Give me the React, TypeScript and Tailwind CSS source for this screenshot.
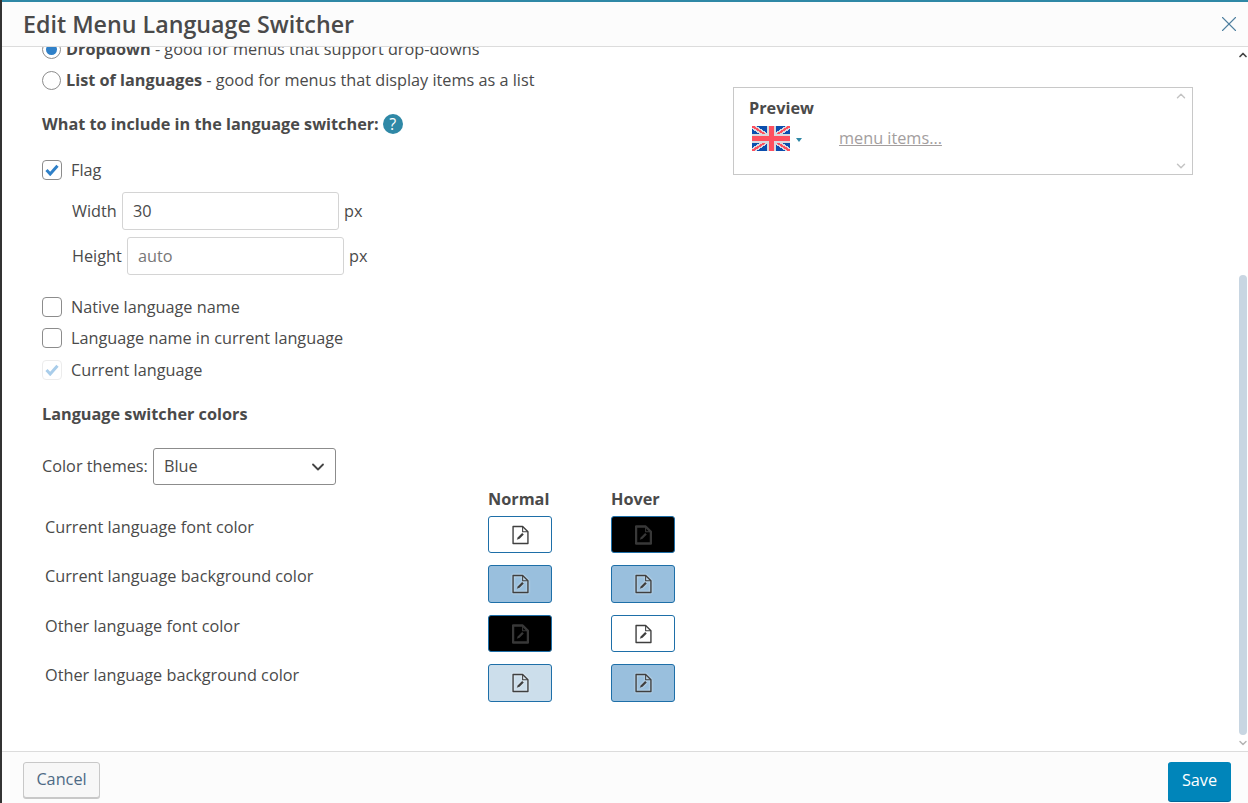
import { ChevronDown, ChevronUp, X } from "lucide-react";

const colorRows = [
  { label: "Current language font color", normal: "bg-white", hover: "bg-black" },
  { label: "Current language background color", normal: "bg-[#99bfdd]", hover: "bg-[#99bfdd]" },
  { label: "Other language font color", normal: "bg-black", hover: "bg-white" },
  { label: "Other language background color", normal: "bg-[#ccdeeb]", hover: "bg-[#99bfdd]" },
];

function DocIcon({ dark }: { dark: boolean }) {
  const c = dark ? "#383838" : "#3f3f3f";
  return (
    <svg width="17" height="20" viewBox="0 0 16 18" fill="none" aria-hidden="true" className={dark ? "blur-[0.6px]" : "drop-shadow-[0_0_1px_rgba(255,255,255,0.7)]"}>
      <path d="M1 1h9l5 5v11H1z" stroke={c} strokeWidth={dark ? 2.2 : 1.3} strokeLinejoin="round" />
      <path d="M10 1v5h5" stroke={c} strokeWidth="1" />
      <path d="M4.5 13.5l1-2.5 4-4 1.6 1.6-4 4z" fill={c} />
    </svg>
  );
}

function Swatch({ color }: { color: string }) {
  return (
    <div className={`flex h-[37.5px] w-16 items-center justify-center rounded-[3px] border border-[#1e6fa8] ${color}`}>
      <DocIcon dark={color === "bg-black"} />
    </div>
  );
}

function Check({ checked, faded }: { checked?: boolean; faded?: boolean }) {
  return (
    <span className={`flex size-5 shrink-0 items-center justify-center rounded-[4px] border ${faded ? "border-[#ececec]" : "border-[#8c8c8c]"}`}>
      {checked && (
        <svg width="14" height="12" viewBox="0 0 14 12" aria-hidden="true">
          <path d="M1.5 6l3.7 4L12.5 1.8" fill="none" stroke={faded ? "#a9cdea" : "#2f80c8"} strokeWidth="3" />
        </svg>
      )}
    </span>
  );
}

function Radio({ on }: { on?: boolean }) {
  return (
    <span className="flex size-[19px] shrink-0 items-center justify-center rounded-full border border-[#8c8c8c] bg-white">
      {on && <span className="size-[11px] rounded-full bg-[#2f80c8]" />}
    </span>
  );
}

function UkFlag() {
  return (
    <svg width="38" height="25" viewBox="0 0 38 25" aria-hidden="true" shapeRendering="crispEdges">
      <rect width="38" height="25" fill="#0b4fae" />
      <path d="M0 0L38 25M38 0L0 25" stroke="#d9d9de" strokeWidth="5" />
      <path d="M0 0L38 25M38 0L0 25" stroke="#ff4f5e" strokeWidth="2" />
      <path d="M19 0v25M0 12.5h38" stroke="#d9d9de" strokeWidth="9" />
      <path d="M19 0v25M0 12.5h38" stroke="#ff4f5e" strokeWidth="5" />
    </svg>
  );
}

export default function App() {
  return (
    <div className="flex h-[803px] w-[1248px] overflow-hidden bg-[#333] pl-[2px] font-['Open_Sans',sans-serif] text-[16.25px] text-[#4a4a4a]">
      <div className="flex min-w-0 flex-1 flex-col bg-white">
        <header className="flex h-[47px] shrink-0 items-center justify-between border-t-[2px] border-b border-t-[#2f88a6] border-b-[#dcdcdc] bg-[#fcfcfc] pl-[21px] pr-[6px]">
          <h1 className="pt-[1px] text-[23.25px] font-semibold leading-none">Edit Menu Language Switcher</h1>
          <X className="size-[26px] text-[#4f7f9f]" strokeWidth={1} />
        </header>

        <div className="flex min-h-0 flex-1 overflow-hidden">
          <div className="flex min-w-0 flex-1 overflow-hidden">
            <div className="-mt-[13px] w-[731px] shrink-0 pl-[40px]">
              <div className="flex h-[31px] items-center gap-[5px]">
                <Radio on />
                <span><b className="font-bold">Dropdown</b> - good for menus that support drop-downs</span>
              </div>
              <div className="flex h-[31px] items-center gap-[5px]">
                <Radio />
                <span><b className="font-bold">List of languages</b> - good for menus that display items as a list</span>
              </div>
              <div className="mt-[12px] flex h-[32px] items-center gap-[4px] font-bold">
                What to include in the language switcher:
                <span className="flex size-5 items-center justify-center rounded-full bg-[#2f88a6] text-[16px] font-normal text-white">?</span>
              </div>
              <div className="mt-[14px] flex h-[32px] items-center gap-[9px]">
                <Check checked />
                <span>Flag</span>
              </div>
              <div className="mt-[6px] flex items-center pl-[30px]">
                <span className="w-[50px]">Width</span>
                <div className="flex h-[38px] w-[217px] items-center rounded-[3px] border border-[#d4d4d4] px-[10px]">30</div>
                <span className="ml-[5px]">px</span>
              </div>
              <div className="mt-[7px] flex items-center pl-[30px]">
                <span className="w-[55px]">Height</span>
                <div className="flex h-[38px] w-[217px] items-center rounded-[3px] border border-[#d4d4d4] px-[10px] text-[#777]">auto</div>
                <span className="ml-[5px]">px</span>
              </div>
              <div className="mt-[16px] flex h-[32px] items-center gap-[9px]">
                <Check />
                <span>Native language name</span>
              </div>
              <div className="flex h-[30px] items-center gap-[9px]">
                <Check />
                <span>Language name in current language</span>
              </div>
              <div className="flex h-[34px] items-center gap-[9px]">
                <Check checked faded />
                <span>Current language</span>
              </div>
              <div className="mt-[11px] flex h-[32px] items-center font-bold">Language switcher colors</div>
              <div className="mt-[18px] flex items-center">
                <span className="w-[111px]">Color themes:</span>
                <div className="flex h-[37px] w-[183px] items-center justify-between rounded-[3px] border border-[#8c8c8c] pl-[10px] pr-[7px]">
                  Blue
                  <ChevronDown className="size-[20px] text-[#444]" strokeWidth={2.2} />
                </div>
              </div>
              <div className="mt-[2px] grid grid-cols-[443px_123px_64px] pl-[3px]">
                <span />
                <b className="h-[28.75px] font-bold leading-[24px]">Normal</b>
                <b className="h-[28.75px] font-bold leading-[24px]">Hover</b>
                {colorRows.map((row) => (
                  <div key={row.label} className="contents">
                    <span className="h-[49.5px] leading-[22px]">{row.label}</span>
                    <Swatch color={row.normal} />
                    <Swatch color={row.hover} />
                  </div>
                ))}
              </div>
            </div>
            <div className="pt-[40px]">
              <div className="relative h-[88px] w-[460px] border border-[#c8c8c8] pl-[18px] pt-[9px]">
                <div className="-ml-[3px] font-bold leading-[22px]">Preview</div>
                <div className="mt-[7px] flex items-center">
                  <UkFlag />
                  <span className="ml-[6px] mt-[2px] size-0 border-x-[3px] border-t-[4px] border-x-transparent border-t-[#2f88a6]" />
                  <span className="ml-[37px] text-[#a39e9e] underline">menu items...</span>
                </div>
                <ChevronUp className="absolute right-[4px] top-[1px] size-[14px] text-[#c4c4c4]" strokeWidth={2.5} />
                <ChevronDown className="absolute bottom-[1px] right-[4px] size-[14px] text-[#c4c4c4]" strokeWidth={2.5} />
              </div>
            </div>
          </div>

          <div className="flex w-[10px] shrink-0 flex-col items-center">
            <ChevronUp className="mt-[2px] size-[12px] text-[#444]" strokeWidth={3.5} />
            <div className="mt-[214px] h-[460px] w-[8px] rounded-[4px] bg-[#c8d6e2]" />
            <ChevronDown className="mt-[2px] size-[12px] text-[#b5b5b5]" strokeWidth={3} />
          </div>
        </div>

        <footer className="flex h-[52px] shrink-0 items-start justify-between border-t border-[#dcdcdc] bg-[#fcfcfc] pl-[21px] pr-[17px] pt-[10px]">
          <button className="flex h-[36px] w-[77px] items-center justify-center rounded-[3px] border border-[#c8c8c8] bg-[#f7f7f7] pb-[2px] text-[#4d6a85] shadow-[0_1px_0_#c8c8c8]">Cancel</button>
          <button className="flex h-[39px] w-[63px] items-center justify-center rounded-[3px] bg-[#0085ba] pb-[2px] text-white shadow-[0_1px_0_#006799]">Save</button>
        </footer>
      </div>
    </div>
  );
}
